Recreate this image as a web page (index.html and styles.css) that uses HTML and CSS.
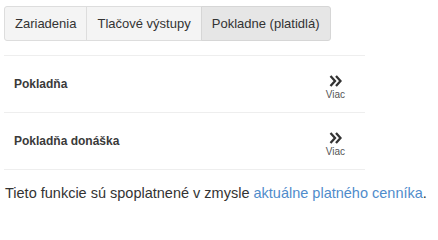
FILE: index.html
```html
<!DOCTYPE html>
<html lang="sk">
<head>
<meta charset="utf-8">
<link rel="stylesheet" href="styles.css">
</head>
<body>
<div class="page">
  <div class="tabs">
    <button class="tab">Zariadenia</button>
    <button class="tab">Tlačové výstupy</button>
    <button class="tab active">Pokladne (platidlá)</button>
  </div>
  <div class="list">
    <div class="row">
      <span class="name">Pokladňa</span>
      <span class="more">
        <svg class="chev" width="13" height="12" viewBox="0 0 13 12"><path d="M1.5 1 L6 6 L1.5 11 M7 1 L11.5 6 L7 11" fill="none" stroke="#333" stroke-width="2.3"/></svg>
        <span class="more-label">Viac</span>
      </span>
    </div>
    <div class="row">
      <span class="name">Pokladňa donáška</span>
      <span class="more">
        <svg class="chev" width="13" height="12" viewBox="0 0 13 12"><path d="M1.5 1 L6 6 L1.5 11 M7 1 L11.5 6 L7 11" fill="none" stroke="#333" stroke-width="2.3"/></svg>
        <span class="more-label">Viac</span>
      </span>
    </div>
  </div>
  <p class="note">Tieto funkcie sú spoplatnené v zmysle <a href="#">aktuálne platného cenníka</a>.</p>
</div>
</body>
</html>
```
FILE: styles.css
```css
html, body {
  margin: 0;
  padding: 0;
  background: #fff;
}
body {
  font-family: "Liberation Sans", Arial, sans-serif;
  color: #333;
}
.page {
  padding: 6px 0 0 4px;
}
.tabs {
  display: flex;
}
.tab {
  font-family: inherit;
  font-size: 13px;
  color: #333;
  background: #f4f4f4;
  border: 1px solid #ddd;
  height: 35px;
  padding: 0 10px;
  margin: 0 0 0 -1px;
  cursor: pointer;
}
.tab:first-child {
  margin-left: 0;
  border-radius: 3px 0 0 3px;
}
.tab:last-child {
  border-radius: 0 3px 3px 0;
}
.tab.active {
  background: #e6e6e6;
  border-color: #d6d6d6;
  width: 130px;
}
.list {
  margin-top: 14px;
  width: 361px;
  border-top: 1px solid #eee;
}
.row {
  display: flex;
  align-items: center;
  justify-content: space-between;
  height: 56px;
  border-bottom: 1px solid #eee;
  padding: 0 20px 0 10px;
}
.name {
  font-size: 12px;
  font-weight: bold;
  color: #3a3a3a;
}
.more {
  display: flex;
  flex-direction: column;
  align-items: center;
  margin-top: 7px;
}
.chev {
  display: block;
}
.more-label {
  font-size: 10px;
  color: #555;
  margin-top: 2px;
}
.note {
  margin: 15px 0 0 1px;
  font-size: 14.5px;
  color: #333;
}
.note a {
  color: #4f8ccb;
  text-decoration: none;
}
```
